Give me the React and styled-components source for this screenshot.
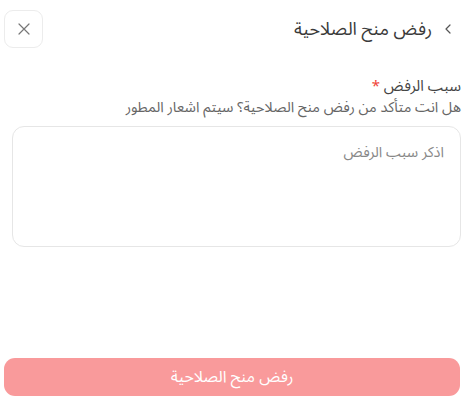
import React from "react";
import styled, { createGlobalStyle } from "styled-components";

const Global = createGlobalStyle`
  html, body { margin: 0; padding: 0; background: #fff; }
  body { font-family: "Noto Sans Arabic", "Noto Sans", "DejaVu Sans", sans-serif; }
  * { box-sizing: border-box; }
`;

const Page = styled.div`
  direction: rtl;
  width: 465px;
  height: 407px;
  display: flex;
  flex-direction: column;
  padding: 10px 5px 11px 4px;
`;

const Header = styled.div`
  display: flex;
  align-items: center;
  justify-content: space-between;
  height: 38px;
`;

const TitleGroup = styled.div`
  display: flex;
  align-items: center;
  gap: 12px;
  padding-right: 8px;
  color: #3a3a3a;
`;

const Title = styled.h1`
  margin: 0;
  font-size: 18px;
  line-height: 24px;
  font-weight: 400;
  color: #3a3a3a;
`;

const CloseButton = styled.button`
  width: 39px;
  height: 38px;
  border: 1px solid #ececec;
  border-radius: 9px;
  background: #fff;
  display: flex;
  align-items: center;
  justify-content: center;
  padding: 0;
  color: #777;
`;

const Field = styled.div`
  display: flex;
  flex-direction: column;
  margin-top: 28px;
  margin-right: -1px;
`;

const Label = styled.label`
  font-size: 15px;
  line-height: 20px;
  color: #444;
`;

const Required = styled.span`
  color: #f04438;
`;

const Hint = styled.p`
  margin: 2px 0 0;
  font-size: 14.5px;
  line-height: 19px;
  color: #666;
`;

const TextArea = styled.textarea`
  margin: 9px 0 0 8px;
  height: 121px;
  border: 1px solid #e6e6e6;
  border-radius: 12px;
  padding: 16px 16px;
  font-family: inherit;
  font-size: 14.5px;
  line-height: 20px;
  resize: none;
  outline: none;
  color: #333;
  &::placeholder { color: #888; }
`;

const Submit = styled.button`
  margin-top: auto;
  height: 38px;
  width: 100%;
  border: none;
  border-radius: 11px;
  background: #f99a9b;
  color: #fff;
  font-family: inherit;
  font-size: 16px;
`;

export default function App() {
  return (
    <>
      <Global />
      <Page>
        <Header>
          <TitleGroup>
            <svg width="8" height="10" viewBox="0 0 8 10" fill="none">
              <path d="M6 1L2 5l4 4" stroke="#555" strokeWidth="1.2" strokeLinecap="round" strokeLinejoin="round" />
            </svg>
            <Title>رفض منح الصلاحية</Title>
          </TitleGroup>
          <CloseButton aria-label="close">
            <svg width="12" height="12" viewBox="0 0 12 12" fill="none">
              <path d="M1 1l10 10M11 1L1 11" stroke="#777" strokeWidth="1.2" strokeLinecap="round" />
            </svg>
          </CloseButton>
        </Header>
        <Field>
          <Label>
            سبب الرفض <Required>*</Required>
          </Label>
          <Hint>هل انت متأكد من رفض منح الصلاحية؟ سيتم اشعار المطور</Hint>
          <TextArea placeholder="اذكر سبب الرفض" />
        </Field>
        <Submit>رفض منح الصلاحية</Submit>
      </Page>
    </>
  );
}
